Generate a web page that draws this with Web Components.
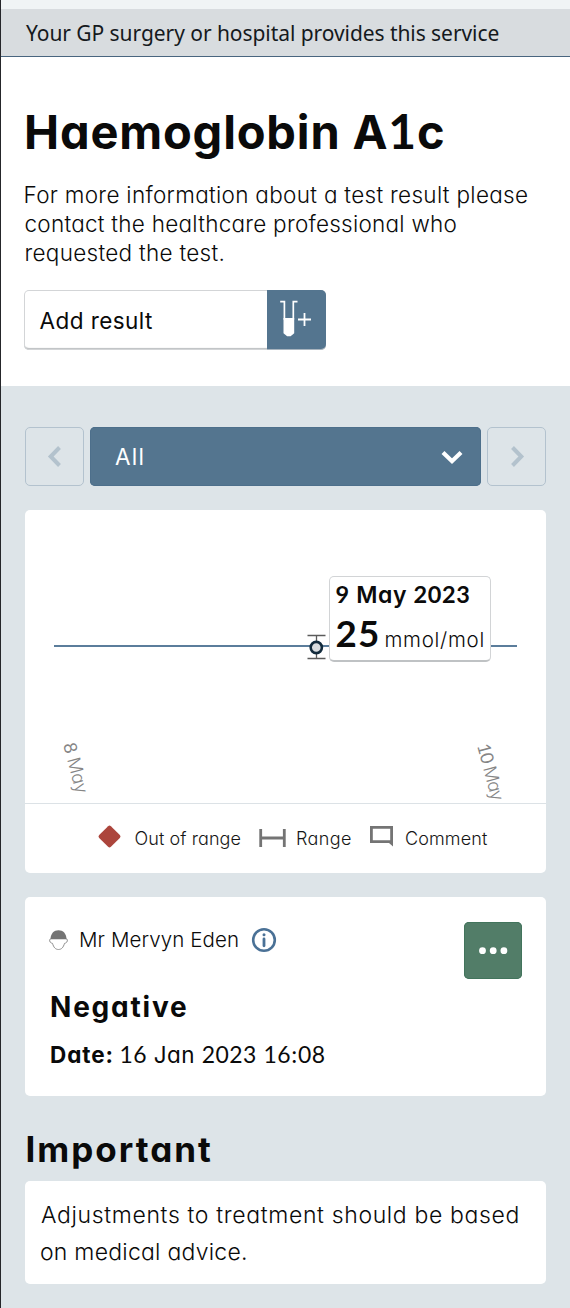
<!DOCTYPE html>
<html lang="en">
<head>
<meta charset="utf-8">
<title>Haemoglobin A1c</title>
<style>
  html, body { margin: 0; height: 1308px; overflow: hidden; }
  body { background: #dde4e8; color: #0a0a0a; font-family: Inter, Lato, sans-serif; font-feature-settings: "cv11"; font-optical-sizing: none; font-weight: 360; }
</style>
</head>
<body>
<result-page>
  <service-banner slot="banner"></service-banner>
  <test-hero slot="hero"></test-hero>
  <range-picker></range-picker>
  <result-chart></result-chart>
  <patient-result></patient-result>
  <important-note></important-note>
</result-page>
<script>
const define = (name, html, after) => {
  const tpl = document.createElement('template');
  tpl.innerHTML = html.trim();
  customElements.define(name, class extends HTMLElement {
    constructor() {
      super();
      this.attachShadow({ mode: 'open' }).append(tpl.content.cloneNode(true));
    }
    connectedCallback() { if (after) after(this); }
  });
};

/* A line of text tracked so that its glyphs span exactly `span` pixels.
   Digits are set in Lato, whose 1 has a foot. */
const pen = document.createElement('canvas').getContext('2d');
define('tracked-line', `
  <style>
    :host { display: inline-block; white-space: nowrap; }
    span { display: inline-block; }
    ::slotted(span) { font-family: Lato, sans-serif; font-weight: var(--digit-weight, 400); font-size: 1.02em; line-height: 1px; }
  </style><span><slot></slot></span>`, host => {
  const span = +host.getAttribute('span');
  const el = host.shadowRoot.querySelector('span');
  const text = host.textContent;
  const cs = getComputedStyle(host);
  const ink = ch => {
    const digit = /\d/.test(ch);
    pen.font = digit ? `${cs.fontWeight >= 600 ? 700 : 400} ${cs.fontSize} Lato` : `${cs.fontWeight} ${cs.fontSize} ${cs.fontFamily}`;
    return pen.measureText(ch);
  };
  host.style.setProperty('--digit-weight', cs.fontWeight >= 600 ? 700 : 400);
  host.innerHTML = text.replace(/\d+/g, '<span>$&</span>');
  const left = -ink(text[0]).actualBoundingBoxLeft;
  const last = ink(text[text.length - 1]);
  const right = last.width - last.actualBoundingBoxRight;
  const natural = el.getBoundingClientRect().width - left - right;
  const gap = (span - natural) / (text.length - 1);
  el.style.letterSpacing = gap + 'px';
  el.style.marginLeft = -left + 'px';
  host.style.width = span + 'px';
});

define('result-page', `
  <style>
    :host { display: block; box-sizing: border-box; height: 1308px; border-left: 1px solid #25262a; background: #dde4e8; }
    main { display: flex; flex-direction: column; padding: 41px 24px 0; }
  </style>
  <slot name="banner"></slot><slot name="hero"></slot><main><slot></slot></main>`);

define('service-banner', `
  <style>
    :host { display: block; border-top: 9px solid #f0f4f5; border-bottom: 1px solid #49657f; background: #d8dcdf; height: 47px; padding-left: 25px; font: 21px/48px "Noto Sans", sans-serif; color: #15191d; }
  </style>
  <tracked-line span="472.500">Your GP surgery or hospital provides this service</tracked-line>`);

define('test-hero', `
  <style>
    :host { display: block; box-sizing: border-box; height: 329px; background: #fff; padding: 47px 24px 0; }
    h1 { margin: 0 0 20px; font-size: 47px; line-height: 55px; font-weight: 700; height: 56px; padding-left: 2px }
    p { margin: 0 0 23px; font-size: 22.5px; line-height: 29px; display: flex; flex-direction: column; align-items: flex-start; padding-left: .5px; }
  </style>
  <h1><tracked-line span="416">Haemoglobin A1c</tracked-line></h1>
  <p><tracked-line span="501.500">For more information about a test result please</tracked-line><tracked-line span="431">contact the healthcare professional who</tracked-line><tracked-line span="198">requested the test.</tracked-line></p>
  <add-result></add-result>`);

define('add-result', `
  <style>
    :host { display: flex; box-sizing: border-box; width: 302px; height: 60px; margin-left: -1px; border-radius: 5px; background: #fff; box-shadow: inset 0 0 0 1px #d3d5d7, inset 0 -3px 1px -1px #bcbfc1; }
    .label { flex: 1; padding-left: 15.5px; font-size: 22.5px; line-height: 62px; font-weight: 400; }
    svg { width: 59px; height: 59px; background: #54758f; border-radius: 0 5px 5px 0; box-shadow: 0 1px 0 #a8b4be; }
  </style>
  <div class="label"><tracked-line span="112.500">Add result</tracked-line></div>
  <svg viewBox="0 0 59 59"><path d="M13.2 11.7h4.200v18M30.500 11.700h-4.200v18" fill="none" stroke="#fff" stroke-width="1.700"/><path d="M16.500 28h10.700v15.200l-3.600 3.100h-3.500l-3.600-3.100z" fill="#fff"/><path d="M31 29.500h13M37.500 23v13" stroke="#fff" stroke-width="1.800"/></svg>`);

define('range-picker', `
  <style>
    :host { display: grid; grid-template-columns: 59px 1fr 59px; column-gap: 6px; height: 59px; margin-bottom: 24px; }
    .step { box-sizing: border-box; border: 1px solid #b3c2ce; border-radius: 5px; }
    .step svg { width: 57px; height: 57px; display: block; fill: none; stroke: #b3c2cd; stroke-width: 4; }
    .pick { display: flex; justify-content: space-between; align-items: center; background: #54758f; border-radius: 5px; color: #fff; font-size: 22.5px; font-weight: 400; line-height: 62px; height: 59px; padding: 0 18.500px 0 25px; box-shadow: inset 0 0 0 1px #4d6f8b; }
    .pick svg { width: 22px; height: 16px; }
  </style>
  <div class="step"><svg viewBox="0 0 57 57"><path d="M33.500 19.500l-8.800 9 8.800 9"/></svg></div>
  <div class="pick"><tracked-line span="27.500">All</tracked-line><svg viewBox="0 0 22 16"><path d="M2 3.500l9 8.700 9-8.700" fill="none" stroke="#fff" stroke-width="4.200"/></svg></div>
  <div class="step"><svg viewBox="0 0 57 57"><path d="M24.500 19.500l8.800 9-8.800 9"/></svg></div>`);

define('result-chart', `
  <style>
    :host { display: block; box-sizing: border-box; height: 363px; margin-bottom: 24px; background: #fff; border-radius: 5px; overflow: hidden; }
    .plot { position: relative; height: 293px; border-bottom: 1px solid #dce2e6; }
    svg.axes { display: block; overflow: visible; width: 521px; height: 293px; font-size: 18px; fill: #858585; }
    .num { font-family: Lato, sans-serif; font-weight: 400; }
    value-tip { position: absolute; left: 304px; top: 65.5px; }
    .legend { display: flex; align-items: center; height: 69px; font-size: 18px; line-height: 69px; color: #161616; }
    .legend svg { display: block; flex: none; }
    .diamond { margin: -5px 13.5px 0 72px; }
    .span { margin: 0 11.500px 0 18px; }
    .comment { margin: -3px 12px 0 19px; }
  </style>
  <div class="plot">
    <svg class="axes" viewBox="0 0 521 293">
      <path d="M29 136h463" stroke="#24527a" stroke-width="1.4"/>
      <path d="M282.500 125.500h18M282.500 148.500h18M291.500 125.500v23" stroke="#5b5b5b" stroke-width="1.300"/>
      <circle cx="291.300" cy="137.500" r="5.600" fill="#dadde0" stroke="#132b3d" stroke-width="2.600"/>
      <text transform="translate(38 234.500) rotate(75)" textLength="52"><tspan class="num">8</tspan> May</text>
      <text transform="translate(452 235.500) rotate(75)" textLength="58.500"><tspan class="num">10</tspan> May</text>
    </svg>
    <value-tip></value-tip>
  </div>
  <div class="legend">
    <svg class="diamond" width="25" height="25" viewBox="0 0 25 25"><rect x="4.200" y="4.200" width="16.600" height="16.600" rx="2" transform="rotate(45 12.500 12.500)" fill="#ac453c"/></svg>
    <tracked-line span="105">Out of range</tracked-line>
    <svg class="span" width="27" height="20" viewBox="0 0 27 20"><path d="M1.700 1v18M25.300 1v18M1.700 10h23.600" stroke="#747474" stroke-width="2.800" transform="translate(0 -1)"/></svg>
    <tracked-line span="54">Range</tracked-line>
    <svg class="comment" width="24" height="22" viewBox="0 0 24 22"><path d="M.5 1h23v20.500L19.500 18H.5zM3.300 3.800v11.400h17.400V3.800z" fill="#747474" fill-rule="evenodd" transform="translate(-.5 -1)"/></svg>
    <tracked-line span="81">Comment</tracked-line>
  </div>`);

define('value-tip', `
  <style>
    :host { display: block; box-sizing: border-box; width: 162px; height: 86px; padding: 3px 6.500px 0 6.500px; background: #fff; border: 1px solid #d2d4d6; border-bottom: 2px solid #bfc2c4; border-radius: 5px; color: #0b0b0b; }
    .day { font-size: 23px; line-height: 30px; height: 30px; font-weight: 600; margin-left: -1px; }
    .value { display: flex; align-items: baseline; justify-content: space-between; line-height: 48px; height: 48px; }
    b { font-size: 36px; font-weight: 700; }
    .unit { font-size: 20.500px; }
  </style>
  <div class="day"><tracked-line span="134">9 May 2023</tracked-line></div>
  <div class="value"><b><tracked-line span="41">25</tracked-line></b><tracked-line class="unit" span="98">mmol/mol</tracked-line></div>`);

define('patient-result', `
  <style>
    :host { display: flex; box-sizing: border-box; justify-content: space-between; height: 199px; padding: 25px 24px 0 25px; background: #fff; border-radius: 5px; }
    .who { display: flex; align-items: center; height: 36px; font-size: 20.500px; line-height: 38px; margin-left: -2px; }
    .who svg { display: block; }
    .head { margin-right: 12px; }
    .info { margin-left: 13px; }
    h2 { margin: 26px 0 0 1px; font-size: 28px; line-height: 46px; height: 46px; font-weight: 700; }
    .date { font-size: 22.500px; line-height: 44px; margin: 3px 0 0 1px; display: flex; gap: 9px; font-weight: 400; }
    .date b { font-weight: 700; }
    .menu { width: 58px; height: 57px; background: #527d68; border-radius: 5px; box-shadow: inset 0 0 0 1px #42745c; }
  </style>
  <div>
    <div class="who">
      <svg class="head" width="20" height="22" viewBox="0 0 20 22"><g transform="translate(.5 .5)"><path d="M3 9C1 9.300.6 11 1.700 12.600c.7.9 1.700 1.100 2.300 1.300C5.200 18 7 20 10 20s4.800-2 6-6.100c.6-.2 1.600-.4 2.300-1.300C19.400 11 19 9.300 17 9" fill="#fff" stroke="#909090" stroke-width="1"/><path d="M2 9.700C2 4 5.500.7 10 .7S18 4 18 9.700z" fill="#747474"/></g></svg>
      <tracked-line span="158">Mr Mervyn Eden</tracked-line>
      <svg class="info" width="26" height="26" viewBox="0 0 26 26"><circle cx="13" cy="13" r="10.800" fill="none" stroke="#4a7196" stroke-width="2.600"/><circle cx="13" cy="7.800" r="1.500" fill="#4a7196"/><path d="M13 12v6.800" stroke="#4a7196" stroke-width="2.800" stroke-linecap="round"/></svg>
    </div>
    <h2><tracked-line span="135">Negative</tracked-line></h2>
    <div class="date"><b><tracked-line span="60.500">Date:</tracked-line></b><tracked-line span="203.500">16 Jan 2023 16:08</tracked-line></div>
  </div>
  <svg class="menu" viewBox="0 0 58 57" fill="#fff"><circle cx="18.500" cy="28.700" r="3.400"/><circle cx="29.200" cy="28.700" r="3.400"/><circle cx="39.900" cy="28.700" r="3.400"/></svg>`);

define('important-note', `
  <style>
    :host { display: block; }
    h2 { margin: 29px 0 8px 2.500px; font-size: 35px; line-height: 48px; height: 48px; font-weight: 700; }
    div { box-sizing: border-box; height: 103px; background: #fff; border-radius: 5px; padding: 16px; font-size: 23px; line-height: 36.500px; display: flex; flex-direction: column; align-items: flex-start; }
  </style>
  <h2><tracked-line span="183.500">Important</tracked-line></h2>
  <div><tracked-line span="476.500">Adjustments to treatment should be based</tracked-line><tracked-line span="205">on medical advice.</tracked-line></div>`);
</script>
</body>
</html>
